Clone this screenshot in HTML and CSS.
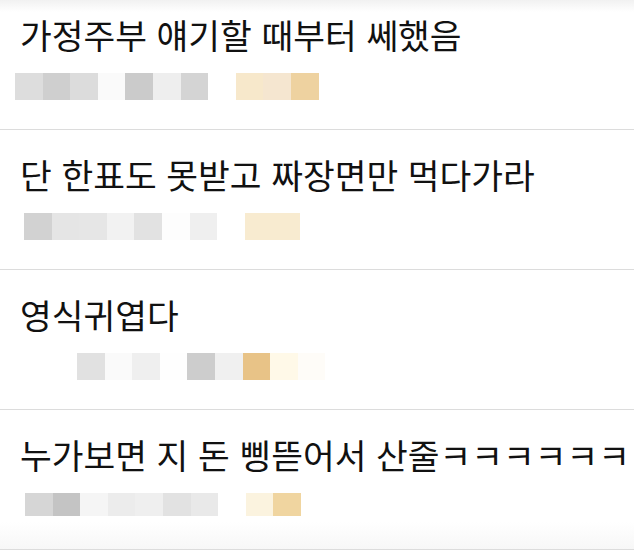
FILE: index.html
```html
<!DOCTYPE html>
<html lang="ko">
<head>
    <meta charset="UTF-8">
    <meta name="viewport" content="width=device-width, initial-scale=1.0">
    <title>댓글</title>
    <link rel="stylesheet" href="styles.css">
</head>
<body>
    <div class="top-fade"></div>

    <ul class="comments">
        <li class="comment">
            <p class="comment-text">가정주부 얘기할 때부터 쎄했음</p>
            <div class="meta" style="padding-left: 15px">
                <span class="cell" style="background: #dddddd"></span>
                <span class="cell" style="background: #cfcfcf"></span>
                <span class="cell" style="background: #dcdcdc"></span>
                <span class="cell" style="background: #fafafa"></span>
                <span class="cell" style="background: #cbcbcb"></span>
                <span class="cell" style="background: #eeeeee"></span>
                <span class="cell" style="background: #d4d4d4"></span>
                <span class="cell"></span>
                <span class="cell" style="background: #f7e8cb"></span>
                <span class="cell" style="background: #f5e6d0"></span>
                <span class="cell" style="background: #eed2a0"></span>
            </div>
        </li>
        <li class="comment">
            <p class="comment-text">단 한표도 못받고 짜장면만 먹다가라</p>
            <div class="meta" style="padding-left: 24px">
                <span class="cell" style="background: #d2d2d2"></span>
                <span class="cell" style="background: #e5e5e5"></span>
                <span class="cell" style="background: #e6e6e6"></span>
                <span class="cell" style="background: #f2f2f2"></span>
                <span class="cell" style="background: #e2e2e2"></span>
                <span class="cell" style="background: #fdfdfd"></span>
                <span class="cell" style="background: #efefef"></span>
                <span class="cell"></span>
                <span class="cell" style="background: #f8ebd0"></span>
                <span class="cell" style="background: #f8ebd0"></span>
            </div>
        </li>
        <li class="comment">
            <p class="comment-text">영식귀엽다</p>
            <div class="meta" style="padding-left: 77px">
                <span class="cell" style="background: #e1e1e1"></span>
                <span class="cell" style="background: #fafafa"></span>
                <span class="cell" style="background: #efefef"></span>
                <span class="cell" style="background: #fefefe"></span>
                <span class="cell" style="background: #cdcdcd"></span>
                <span class="cell" style="background: #f0f0f0"></span>
                <span class="cell" style="background: #e8c387"></span>
                <span class="cell" style="background: #fff9e8"></span>
                <span class="cell" style="background: #fefcf8"></span>
            </div>
        </li>
        <li class="comment">
            <p class="comment-text">누가보면 지 돈 삥뜯어서 산줄ㅋㅋㅋㅋㅋㅋㅋ</p>
            <div class="meta meta-short" style="padding-left: 25px">
                <span class="cell" style="background: #d6d6d6"></span>
                <span class="cell" style="background: #c4c4c4"></span>
                <span class="cell" style="background: #f5f5f5"></span>
                <span class="cell" style="background: #ececec"></span>
                <span class="cell" style="background: #efefef"></span>
                <span class="cell" style="background: #e2e2e2"></span>
                <span class="cell" style="background: #e9e9e9"></span>
                <span class="cell"></span>
                <span class="cell" style="background: #fbf3df"></span>
                <span class="cell" style="background: #f0d5a0"></span>
            </div>
        </li>
    </ul>

    <div class="bottom-fade"></div>
</body>
</html>
```

FILE: styles.css
```css
html, body {
    margin: 0;
    height: 552px;
    overflow: hidden;
    background-color: #fff;
}
body {
    font-family: "Noto Sans CJK KR", "Noto Sans", sans-serif;
    color: #111;
    position: relative;
}
.comments {
    list-style: none;
    margin: -10px 0 0 0;
    padding: 0;
}
.comment {
    height: 140px;
    box-sizing: border-box;
    padding: 24px 0 0 20px;
    border-bottom: 1px solid #dcdcdc;
    overflow: hidden;
}
.comment-text {
    margin: 0;
    font-size: 34.5px;
    line-height: 40px;
    white-space: nowrap;
}
.meta {
    display: flex;
    margin-top: 19px;
    margin-left: -20px;
}
.cell {
    flex: none;
    width: 27.6px;
    height: 27px;
}
.meta-short .cell {
    height: 23px;
}
/* shading at the top and bottom edges of the list */
.top-fade {
    position: absolute;
    left: 0;
    right: 0;
    top: 0;
    height: 12px;
    background: linear-gradient(#f1f1f1, rgba(255, 255, 255, 0));
    z-index: 1;
}
.bottom-fade {
    position: absolute;
    left: 0;
    right: 0;
    top: 522px;
    height: 27px;
    background: linear-gradient(rgba(255, 255, 255, 0), #f7f7f7);
    z-index: 1;
}
```
